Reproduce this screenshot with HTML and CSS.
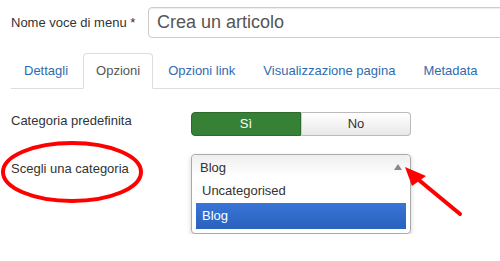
FILE: index.html
```html
<!DOCTYPE html>
<html lang="it">
<head>
  <meta charset="UTF-8">
  <title>Voce di menu</title>
  <link rel="stylesheet" href="styles.css">
</head>
<body>
  <div class="page">
    <div class="title-row">
      <label class="title-label" for="title">Nome voce di menu *</label>
      <input type="text" id="title" class="title-input" value="Crea un articolo">
    </div>

    <ul class="nav-tabs">
      <li><a href="#">Dettagli</a></li>
      <li class="active"><a href="#">Opzioni</a></li>
      <li><a href="#">Opzioni link</a></li>
      <li><a href="#">Visualizzazione pagina</a></li>
      <li><a href="#">Metadata</a></li>
    </ul>

    <div class="control-group first">
      <div class="control-label">Categoria predefinita</div>
      <div class="btn-group">
        <span class="btn btn-yes">Sì</span>
        <span class="btn btn-no">No</span>
      </div>
    </div>

    <div class="control-group">
      <div class="control-label low">Scegli una categoria</div>
      <div class="chzn">
        <div class="chzn-single">
          <span>Blog</span>
          <b class="chzn-arrow"></b>
        </div>
        <ul class="chzn-results">
          <li>Uncategorised</li>
          <li class="highlighted">Blog</li>
        </ul>
      </div>
    </div>
  </div>

  <!-- annotations drawn over the screenshot -->
  <svg class="marks" width="500" height="261" viewBox="0 0 500 261">
    <ellipse cx="72" cy="172" rx="69" ry="29" fill="none" stroke="#f00" stroke-width="4"/>
    <line x1="460" y1="214" x2="414" y2="176" stroke="#f00" stroke-width="4" stroke-linecap="round"/>
    <polygon points="405,167 426,176 412,186" fill="#f00"/>
  </svg>
</body>
</html>
```

FILE: styles.css
```css
body {
  margin: 0;
  font-family: "Liberation Sans", Arial, sans-serif;
  font-size: 13px;
  color: #333;
  background: #fff;
  overflow: hidden;
}

.page {
  width: 500px;
  box-sizing: border-box;
  padding: 7px 0 0 11px;
}

.title-row {
  display: flex;
  align-items: center;
  overflow: hidden;
}

.title-label {
  width: 137px;
  flex-shrink: 0;
}

.title-input {
  width: 400px;
  height: 31px;
  box-sizing: border-box;
  flex-shrink: 0;
  padding: 0 8px;
  border: 1px solid #ccc;
  border-radius: 4px;
  box-shadow: inset 0 1px 1px rgba(0, 0, 0, 0.075);
  font-family: "Liberation Sans", Arial, sans-serif;
  font-size: 18px;
  color: #555;
}

.nav-tabs {
  display: flex;
  list-style: none;
  margin: 15px 0 0 0;
  padding: 0;
  border-bottom: 1px solid #ddd;
}

.nav-tabs li {
  margin-right: 2px;
  margin-bottom: -1px;
}

.nav-tabs a {
  display: block;
  padding: 7px 12px;
  line-height: 20px;
  border: 1px solid transparent;
  border-radius: 4px 4px 0 0;
  color: #2f6cb0;
  text-decoration: none;
}

.nav-tabs .active a {
  color: #555;
  background: #fff;
  border-color: #ddd #ddd transparent;
}

.control-group {
  display: flex;
  align-items: flex-start;
  margin-top: 18px;
}

.control-group.first {
  margin-top: 23px;
}

.control-label {
  width: 180px;
  flex-shrink: 0;
  padding-top: 1px;
}

.control-label.low {
  padding-top: 7px;
}

.btn-group {
  display: flex;
  width: 220px;
}

.btn {
  flex: 1;
  height: 24px;
  line-height: 22px;
  box-sizing: border-box;
  text-align: center;
  border: 1px solid #bbb;
}

.btn-yes {
  background: #378137;
  border-color: #2d6b2d;
  color: #fff;
  border-radius: 4px 0 0 4px;
}

.btn-no {
  background: linear-gradient(#fff, #e8e8e8);
  border-left-color: #ccc;
  color: #333;
  border-radius: 0 4px 4px 0;
}

.chzn {
  width: 220px;
  box-sizing: border-box;
  border: 1px solid #aaa;
  border-radius: 4px;
  background: #fff;
  box-shadow: 0 2px 5px rgba(0, 0, 0, 0.18);
}

.chzn-single {
  display: flex;
  align-items: center;
  justify-content: space-between;
  height: 24px;
  padding: 0 8px 0 8px;
  background: linear-gradient(#eee 0%, #fff 90%);
  border-radius: 4px 4px 0 0;
}

.chzn-arrow {
  width: 0;
  height: 0;
  border-left: 4px solid transparent;
  border-right: 4px solid transparent;
  border-bottom: 6px solid #888;
  margin-top: -1px;
}

.chzn-results {
  list-style: none;
  margin: 0 4px 4px 4px;
  padding: 0;
}

.chzn-results li {
  padding: 5px 6px;
  line-height: 14px;
}

.chzn-results .highlighted {
  padding: 6px 6px;
  background: linear-gradient(#3875d7 0%, #2a62bc 100%);
  color: #fff;
}

.marks {
  position: absolute;
  left: 0;
  top: 0;
  pointer-events: none;
}
```
